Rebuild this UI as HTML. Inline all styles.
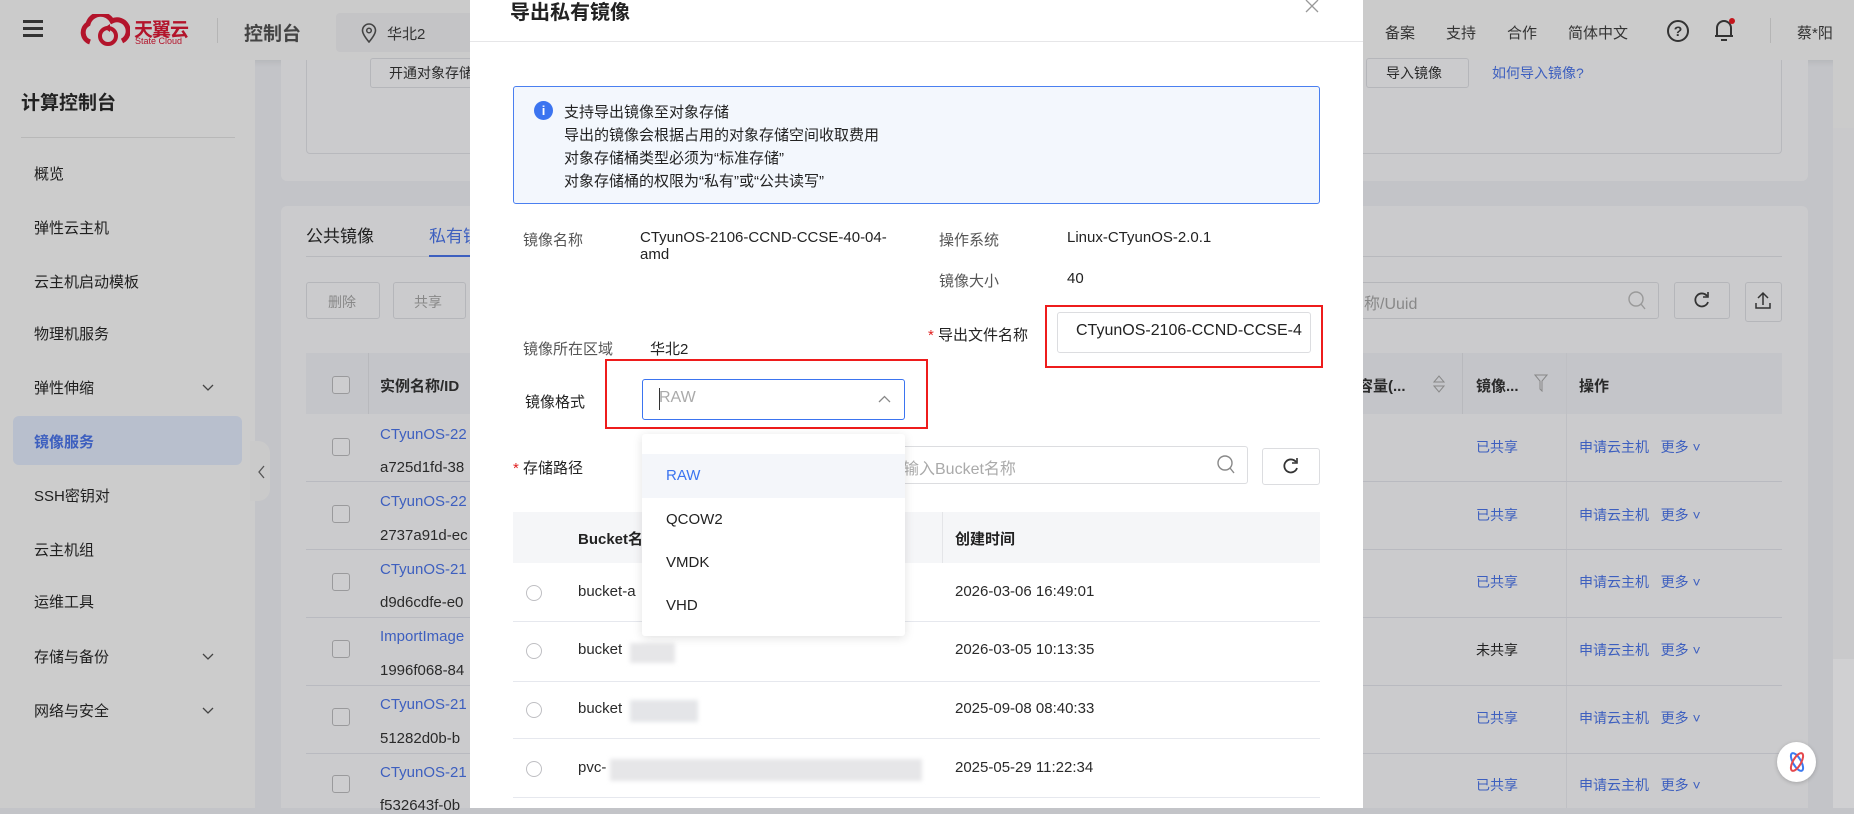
<!DOCTYPE html>
<html><head><meta charset="utf-8">
<style>
*{margin:0;padding:0;box-sizing:border-box}
body{width:1854px;height:808px;overflow:hidden;position:relative;background:#c3c4c8;font-family:"Liberation Sans","Noto Sans CJK SC",sans-serif;color:#2a2a2a;font-size:14px}
.a{position:absolute;white-space:nowrap}
.dim{color:#222}
.bl{color:#3d5fbf}
.m{color:#1f1f1f;font-size:15px}
.btn{position:absolute;border:1px solid #b5b6ba;border-radius:3px;background:#cbcbcd}
.cb{position:absolute;width:18px;height:18px;border:1px solid #9a9a9c;border-radius:3px;background:#cdcdcf}
.rd{position:absolute;width:16px;height:16px;border:1px solid #bfbfc3;border-radius:50%;background:#fff}
.hl{position:absolute;height:1px;background:#b9bac0}
.ml{position:absolute;height:1px;background:#e6e8ee}
</style></head><body>
<!-- header -->
<div class="a" style="left:0;top:0;width:1854px;height:60px;background:#cbcbcb;box-shadow:0 2px 6px rgba(0,0,0,.08)"></div>
<div class="a" style="left:23px;top:20px;width:20px;height:3px;background:#333;box-shadow:0 7px 0 #333,0 14px 0 #333"></div>
<svg class="a" style="left:78px;top:14px" width="52" height="32" viewBox="0 0 52 32"><path d="M12 28 A10 10 0 0 1 10 10 A13 13 0 0 1 34 7 A10 10 0 0 1 44 27" fill="none" stroke="#b3142b" stroke-width="5"/><circle cx="30" cy="22" r="8" fill="none" stroke="#b3142b" stroke-width="4"/><path d="M26 14 l6 -4 v8z" fill="#b3142b"/></svg>
<div class="a" style="left:134px;top:15px;font-size:19px;font-weight:bold;color:#b3142b;letter-spacing:-1px">天翼云</div>
<div class="a" style="left:135px;top:36px;font-size:9px;color:#b3142b">State Cloud</div>
<div class="a" style="left:217px;top:18px;width:1px;height:25px;background:#b5b5b5"></div>
<div class="a" style="left:244px;top:19px;font-size:19px;font-weight:bold;color:#444">控制台</div>
<div class="a" style="left:336px;top:13px;width:140px;height:39px;background:#c4c4c6;border-radius:4px"></div>
<svg class="a" style="left:361px;top:23px" width="16" height="20" viewBox="0 0 16 20"><path d="M8 19 C3 13 1.5 10 1.5 7.5 A6.5 6.5 0 0 1 14.5 7.5 C14.5 10 13 13 8 19Z" fill="none" stroke="#444" stroke-width="1.6"/><circle cx="8" cy="7.5" r="2.3" fill="none" stroke="#444" stroke-width="1.5"/></svg>
<div class="a" style="left:387px;top:23px;font-size:15px;color:#333">华北2</div>
<div class="a" style="left:1385px;top:22px;font-size:15px;color:#333">备案</div>
<div class="a" style="left:1446px;top:22px;font-size:15px;color:#333">支持</div>
<div class="a" style="left:1507px;top:22px;font-size:15px;color:#333">合作</div>
<div class="a" style="left:1568px;top:22px;font-size:15px;color:#333">简体中文</div>
<div class="a" style="left:1667px;top:20px;width:22px;height:22px;border:2px solid #333;border-radius:50%;font-size:14px;font-weight:bold;text-align:center;line-height:18px;color:#333">?</div>
<svg class="a" style="left:1713px;top:17px" width="22" height="26" viewBox="0 0 22 26"><path d="M4 19 V11 A7 7 0 0 1 18 11 V19 H20 H2Z M8 23 H14" fill="none" stroke="#333" stroke-width="2"/><circle cx="19" cy="4" r="3" fill="#c4161c"/></svg>
<div class="a" style="left:1770px;top:18px;width:1px;height:25px;background:#b5b5b5"></div>
<div class="a" style="left:1797px;top:22px;font-size:15px;color:#333">蔡*阳</div>
<!-- scrollbar -->
<div class="a" style="left:1833px;top:0;width:21px;height:808px;background:#c9c9cb"></div>
<div class="a" style="left:1833px;top:0;width:21px;height:128px;background:#cbcbcb"></div>
<div class="a" style="left:1833px;top:659px;width:21px;height:149px;background:#d0d0d2"></div>
<!-- sidebar -->
<div class="a" style="left:0;top:60px;width:255px;height:748px;background:#cccccc"></div>
<div class="a" style="left:21px;top:88px;font-size:19px;font-weight:bold;color:#222">计算控制台</div>
<div class="a" style="left:21px;top:137px;width:214px;height:1px;background:#b8b8b8"></div>
<div class="a m" style="left:34px;top:163px">概览</div>
<div class="a m" style="left:34px;top:217px">弹性云主机</div>
<div class="a m" style="left:34px;top:271px">云主机启动模板</div>
<div class="a m" style="left:34px;top:323px">物理机服务</div>
<div class="a m" style="left:34px;top:377px">弹性伸缩</div>
<div class="a" style="left:13px;top:416px;width:229px;height:49px;background:#b8bfcd;border-radius:6px"></div>
<div class="a m bl" style="left:34px;top:431px;font-weight:bold;color:#3d5fbf">镜像服务</div>
<div class="a m" style="left:34px;top:485px">SSH密钥对</div>
<div class="a m" style="left:34px;top:539px">云主机组</div>
<div class="a m" style="left:34px;top:591px">运维工具</div>
<div class="a m" style="left:34px;top:646px">存储与备份</div>
<div class="a m" style="left:34px;top:700px">网络与安全</div>
<svg class="a" style="left:202px;top:384px" width="12" height="8"><path d="M1 1 L6 6 L11 1" fill="none" stroke="#444" stroke-width="1.3"/></svg>
<svg class="a" style="left:202px;top:653px" width="12" height="8"><path d="M1 1 L6 6 L11 1" fill="none" stroke="#444" stroke-width="1.3"/></svg>
<svg class="a" style="left:202px;top:707px" width="12" height="8"><path d="M1 1 L6 6 L11 1" fill="none" stroke="#444" stroke-width="1.3"/></svg>
<div class="a" style="left:250px;top:441px;width:20px;height:60px;background:#cacaca;border-radius:0 12px 12px 0"></div>
<svg class="a" style="left:258px;top:465px" width="8" height="14"><path d="M6 1 L1 7 L6 13" fill="none" stroke="#555" stroke-width="1.3"/></svg>
<!-- main cards -->
<div class="a" style="left:281px;top:60px;width:1527px;height:121px;background:#cbcbcd;border-radius:0 0 6px 6px"></div>
<div class="a" style="left:306px;top:60px;width:1476px;height:94px;border:1px solid #b8b9bd;border-top:none;border-radius:0 0 4px 4px"></div>
<div class="btn" style="left:370px;top:58px;width:110px;height:30px"></div>
<div class="a" style="left:389px;top:63px;font-size:14px">开通对象存储</div>
<div class="btn" style="left:1366px;top:58px;width:103px;height:30px"></div>
<div class="a" style="left:1386px;top:63px;font-size:14px">导入镜像</div>
<div class="a bl" style="left:1492px;top:63px;font-size:14px">如何导入镜像?</div>
<div class="a" style="left:281px;top:206px;width:1527px;height:602px;background:#cbcbcd;border-radius:6px 6px 0 0"></div>
<div class="a" style="left:306px;top:222px;font-size:17px;color:#222">公共镜像</div>
<div class="a bl" style="left:429px;top:222px;font-size:17px">私有镜像</div>
<div class="a" style="left:306px;top:256px;width:1476px;height:1px;background:#b8b9bd"></div>
<div class="a" style="left:429px;top:255px;width:50px;height:2px;background:#3d5fbf"></div>
<div class="btn" style="left:306px;top:282px;width:74px;height:37px"></div><div class="a" style="left:328px;top:292px;color:#888">删除</div>
<div class="btn" style="left:393px;top:282px;width:73px;height:37px"></div><div class="a" style="left:414px;top:292px;color:#888">共享</div>
<div class="btn" style="left:1300px;top:282px;width:359px;height:37px"></div>
<div class="a" style="left:1364px;top:290px;font-size:16px;color:#888">称/Uuid</div>
<svg class="a" style="left:1627px;top:290px" width="20" height="22"><circle cx="9" cy="9" r="7" fill="none" stroke="#999" stroke-width="1.4"/><path d="M14 14 L18 19" stroke="#999" stroke-width="1.4"/></svg>
<div class="btn" style="left:1674px;top:282px;width:56px;height:37px"></div>
<svg class="a" style="left:1693px;top:291px" width="18" height="18"><path d="M14 5 A6.5 6.5 0 1 0 15 11" fill="none" stroke="#333" stroke-width="1.8"/><path d="M15 1 V6 H10" fill="none" stroke="#333" stroke-width="1.6"/></svg>
<div class="btn" style="left:1745px;top:282px;width:37px;height:40px"></div>
<svg class="a" style="left:1754px;top:291px" width="18" height="20"><path d="M9 14 V2 M4 7 L9 2 L14 7 M2 12 V17 H16 V12" fill="none" stroke="#333" stroke-width="1.5"/></svg>
<div class="a" style="left:306px;top:353px;width:1476px;height:61px;background:#c4c5c9"></div>
<div class="a" style="left:368px;top:353px;width:1px;height:61px;background:#b8b9bd"></div>
<div class="cb" style="left:332px;top:376px"></div>
<div class="a" style="left:380px;top:375px;font-weight:bold;font-size:15px">实例名称/ID</div>
<div class="a" style="left:1358px;top:375px;font-weight:bold;font-size:15px">容量(...</div>
<svg class="a" style="left:1433px;top:374px" width="12" height="20"><path d="M1 8 L6 2 L11 8Z M1 12 L6 18 L11 12Z" fill="none" stroke="#888"/></svg>
<div class="a" style="left:1462px;top:353px;width:1px;height:61px;background:#b8b9bd"></div>
<div class="a" style="left:1476px;top:375px;font-weight:bold;font-size:15px">镜像...</div>
<svg class="a" style="left:1534px;top:374px" width="14" height="18"><path d="M1 1 H13 L8 7 V17 L6 15 V7Z" fill="none" stroke="#888"/></svg>
<div class="a" style="left:1566px;top:353px;width:1px;height:455px;background:#bfc0c4"></div>
<div class="a" style="left:1579px;top:375px;font-weight:bold;font-size:15px">操作</div>
<!-- left rows -->
<div class="a bl" style="left:380px;top:426px;font-size:15px">CTyunOS-22</div><div class="a" style="left:380px;top:459px;font-size:15px">a725d1fd-38</div><div class="cb" style="left:332px;top:438px"></div>
<div class="hl" style="left:306px;top:481px;width:1476px"></div>
<div class="a bl" style="left:380px;top:493px;font-size:15px">CTyunOS-22</div><div class="a" style="left:380px;top:527px;font-size:15px">2737a91d-ec</div><div class="cb" style="left:332px;top:505px"></div>
<div class="hl" style="left:306px;top:549px;width:1476px"></div>
<div class="a bl" style="left:380px;top:561px;font-size:15px">CTyunOS-21</div><div class="a" style="left:380px;top:594px;font-size:15px">d9d6cdfe-e0</div><div class="cb" style="left:332px;top:573px"></div>
<div class="hl" style="left:306px;top:617px;width:1476px"></div>
<div class="a bl" style="left:380px;top:628px;font-size:15px">ImportImage</div><div class="a" style="left:380px;top:662px;font-size:15px">1996f068-84</div><div class="cb" style="left:332px;top:640px"></div>
<div class="hl" style="left:306px;top:685px;width:1476px"></div>
<div class="a bl" style="left:380px;top:696px;font-size:15px">CTyunOS-21</div><div class="a" style="left:380px;top:730px;font-size:15px">51282d0b-b</div><div class="cb" style="left:332px;top:708px"></div>
<div class="hl" style="left:306px;top:753px;width:1476px"></div>
<div class="a bl" style="left:380px;top:764px;font-size:15px">CTyunOS-21</div><div class="a" style="left:380px;top:797px;font-size:15px">f532643f-0b</div><div class="cb" style="left:332px;top:775px"></div>
<!-- right rows -->
<div class="a bl" style="left:1476px;top:437px">已共享</div><div class="a bl" style="left:1579px;top:437px">申请云主机&nbsp;&nbsp;&nbsp;更多 ˅</div>
<div class="a bl" style="left:1476px;top:505px">已共享</div><div class="a bl" style="left:1579px;top:505px">申请云主机&nbsp;&nbsp;&nbsp;更多 ˅</div>
<div class="a bl" style="left:1476px;top:572px">已共享</div><div class="a bl" style="left:1579px;top:572px">申请云主机&nbsp;&nbsp;&nbsp;更多 ˅</div>
<div class="a" style="left:1476px;top:640px;color:#222">未共享</div><div class="a bl" style="left:1579px;top:640px">申请云主机&nbsp;&nbsp;&nbsp;更多 ˅</div>
<div class="a bl" style="left:1476px;top:708px">已共享</div><div class="a bl" style="left:1579px;top:708px">申请云主机&nbsp;&nbsp;&nbsp;更多 ˅</div>
<div class="a bl" style="left:1476px;top:775px">已共享</div><div class="a bl" style="left:1579px;top:775px">申请云主机&nbsp;&nbsp;&nbsp;更多 ˅</div>
<div class="a" style="left:1777px;top:742px;width:39px;height:40px;border-radius:50%;background:#fff;box-shadow:0 1px 4px rgba(0,0,0,.2)"></div>
<svg class="a" style="left:1785px;top:750px" width="24" height="24"><ellipse cx="12" cy="12" rx="4" ry="10" transform="rotate(-30 12 12)" fill="none" stroke="#3d7bf0" stroke-width="2"/><ellipse cx="12" cy="12" rx="4" ry="10" transform="rotate(30 12 12)" fill="none" stroke="#e5484d" stroke-width="2"/></svg>

<!-- modal -->
<div class="a" style="left:470px;top:0;width:893px;height:808px;background:#fff"></div>
<div class="a" style="left:510px;top:-4px;font-size:20px;font-weight:bold;color:#222">导出私有镜像</div>
<svg class="a" style="left:1305px;top:0" width="14" height="13"><path d="M1 0 L13 12 M13 0 L1 12" stroke="#999" stroke-width="1.3"/></svg>
<div class="a" style="left:470px;top:41px;width:893px;height:1px;background:#e6e6e8"></div>
<div class="a" style="left:513px;top:86px;width:807px;height:118px;background:#f3f7fd;border:1px solid #4a7ff0;border-radius:3px"></div>
<div class="a" style="left:534px;top:101px;width:19px;height:19px;border-radius:50%;background:#3b74f0;color:#fff;font-size:13px;font-weight:bold;text-align:center;line-height:19px">i</div>
<div class="a" style="left:564px;top:101px;font-size:15px;line-height:23px;color:#222">支持导出镜像至对象存储<br>导出的镜像会根据占用的对象存储空间收取费用<br>对象存储桶类型必须为“标准存储”<br>对象存储桶的权限为“私有”或“公共读写”</div>
<div class="a" style="left:523px;top:229px;font-size:15px;color:#555">镜像名称</div>
<div class="a" style="left:640px;top:229px;font-size:15px;line-height:17px;color:#222">CTyunOS-2106-CCND-CCSE-40-04-<br>amd</div>
<div class="a" style="left:939px;top:229px;font-size:15px;color:#555">操作系统</div>
<div class="a" style="left:1067px;top:229px;font-size:15px;color:#222">Linux-CTyunOS-2.0.1</div>
<div class="a" style="left:939px;top:270px;font-size:15px;color:#555">镜像大小</div>
<div class="a" style="left:1067px;top:270px;font-size:15px;color:#222">40</div>
<div class="a" style="left:523px;top:338px;font-size:15px;color:#555">镜像所在区域</div>
<div class="a" style="left:650px;top:338px;font-size:15px;color:#222">华北2</div>
<div class="a" style="left:928px;top:324px;font-size:15px;color:#222"><span style="color:#e02020">*</span> 导出文件名称</div>
<div class="a" style="left:1045px;top:305px;width:278px;height:63px;border:2px solid #ee1c1c"></div>
<div class="a" style="left:1057px;top:312px;width:254px;height:41px;border:1px solid #dcdde0;border-radius:3px"></div>
<div class="a" style="left:1076px;top:322px;font-size:16px;color:#222">CTyunOS-2106-CCND-CCSE-4</div>
<div class="a" style="left:525px;top:391px;font-size:15px;color:#222">镜像格式</div>
<div class="a" style="left:605px;top:359px;width:323px;height:70px;border:2px solid #ee1c1c"></div>
<div class="a" style="left:642px;top:379px;width:263px;height:41px;border:1px solid #3b74f0;border-radius:3px"></div>
<div class="a" style="left:659px;top:389px;font-size:16px;color:#aaa">RAW</div>
<div class="a" style="left:659px;top:388px;width:1px;height:22px;background:#333"></div>
<svg class="a" style="left:878px;top:395px" width="13" height="8"><path d="M1 7 L6.5 1.5 L12 7" fill="none" stroke="#888" stroke-width="1.3"/></svg>
<div class="a" style="left:525px;top:457px;font-size:15px;color:#222"><span style="color:#e02020;margin-left:-12px">*</span> 存储路径</div>
<div class="a" style="left:872px;top:446px;width:376px;height:38px;border:1px solid #dcdde0;border-radius:3px"></div>
<div class="a" style="left:887px;top:455px;font-size:16px;color:#aaa">请输入Bucket名称</div>
<svg class="a" style="left:1216px;top:454px" width="20" height="22"><circle cx="9" cy="9" r="7" fill="none" stroke="#888" stroke-width="1.4"/><path d="M14 14 L18 19" stroke="#888" stroke-width="1.4"/></svg>
<div class="a" style="left:1262px;top:448px;width:58px;height:37px;border:1px solid #dcdde0;border-radius:3px"></div>
<svg class="a" style="left:1282px;top:457px" width="18" height="18"><path d="M14 5 A6.5 6.5 0 1 0 15 11" fill="none" stroke="#333" stroke-width="1.8"/><path d="M15 1 V6 H10" fill="none" stroke="#333" stroke-width="1.6"/></svg>
<div class="a" style="left:513px;top:512px;width:807px;height:51px;background:#f5f6f8"></div>
<div class="a" style="left:942px;top:512px;width:1px;height:51px;background:#e4e5e8"></div>
<div class="a" style="left:578px;top:528px;font-size:15px;font-weight:bold;color:#222">Bucket名称</div>
<div class="a" style="left:955px;top:528px;font-size:15px;font-weight:bold;color:#222">创建时间</div>
<div class="rd" style="left:526px;top:585px"></div><div class="a" style="left:578px;top:583px;font-size:15px">bucket-a</div><div class="a" style="left:955px;top:583px;font-size:15px">2026-03-06 16:49:01</div>
<div class="ml" style="left:513px;top:621px;width:807px"></div>
<div class="rd" style="left:526px;top:643px"></div><div class="a" style="left:578px;top:641px;font-size:15px">bucket</div><div class="a" style="left:630px;top:643px;width:45px;height:20px;background:#e6e6e8;filter:blur(2px)"></div><div class="a" style="left:955px;top:641px;font-size:15px">2026-03-05 10:13:35</div>
<div class="ml" style="left:513px;top:681px;width:807px"></div>
<div class="rd" style="left:526px;top:702px"></div><div class="a" style="left:578px;top:700px;font-size:15px">bucket</div><div class="a" style="left:630px;top:700px;width:68px;height:22px;background:#e4e5e8;filter:blur(2px)"></div><div class="a" style="left:955px;top:700px;font-size:15px">2025-09-08 08:40:33</div>
<div class="ml" style="left:513px;top:738px;width:807px"></div>
<div class="rd" style="left:526px;top:761px"></div><div class="a" style="left:578px;top:759px;font-size:15px">pvc-</div><div class="a" style="left:610px;top:759px;width:312px;height:22px;background:#e6e6e8;filter:blur(2px)"></div><div class="a" style="left:955px;top:759px;font-size:15px">2025-05-29 11:22:34</div>
<div class="ml" style="left:513px;top:797px;width:807px"></div>
<!-- dropdown -->
<div class="a" style="left:642px;top:434px;width:263px;height:202px;background:#fff;border-radius:3px;box-shadow:0 2px 10px rgba(0,0,0,.12)"></div>
<div class="a" style="left:642px;top:454px;width:263px;height:44px;background:#f4f6fa"></div>
<div class="a" style="left:666px;top:467px;font-size:15px;color:#3b74f0">RAW</div>
<div class="a" style="left:666px;top:511px;font-size:15px;color:#222">QCOW2</div>
<div class="a" style="left:666px;top:554px;font-size:15px;color:#222">VMDK</div>
<div class="a" style="left:666px;top:597px;font-size:15px;color:#222">VHD</div>
</body></html>
